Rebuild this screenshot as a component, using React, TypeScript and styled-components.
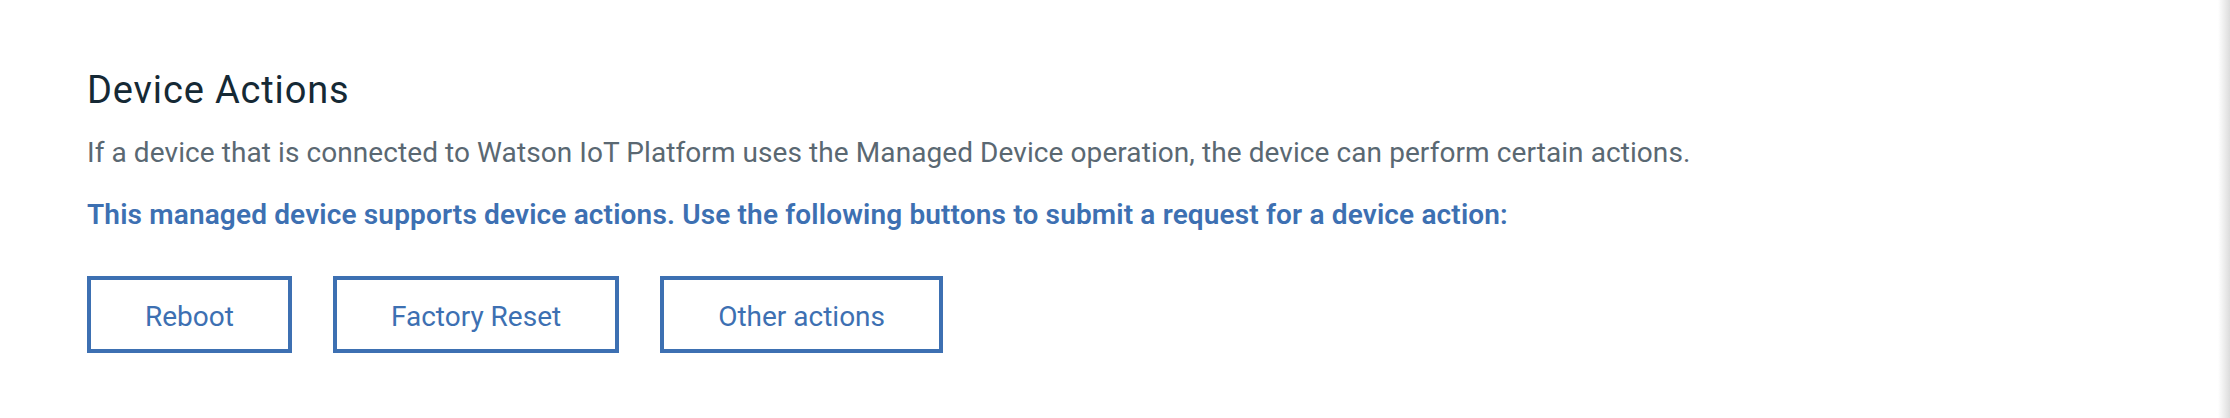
import React, { FC } from "react";
import styled, { createGlobalStyle } from "styled-components";

const GlobalStyle = createGlobalStyle`
  html, body {
    margin: 0;
    padding: 0;
    background: #ffffff;
  }
  body {
    font-family: Roboto, "Liberation Sans", Arial, sans-serif;
  }
`;

const actions = ["Reboot", "Factory Reset", "Other actions"];

const App: FC = () => {
  return (
    <>
      <GlobalStyle />
      <Page>
        <Panel>
          <Title>Device Actions</Title>
          <Description>
            If a device that is connected to Watson IoT Platform uses the
            Managed Device operation, the device can perform certain actions.
          </Description>
          <Notice>
            This managed device supports device actions. Use the following
            buttons to submit a request for a device action:
          </Notice>
          <ButtonRow>
            {actions.map((label) => (
              <ActionButton key={label} type="button">
                {label}
              </ActionButton>
            ))}
          </ButtonRow>
        </Panel>
        <EdgeShadow />
      </Page>
    </>
  );
};

const Page = styled.div`
  display: flex;
  width: 100%;
  height: 418px;
`;

const Panel = styled.main`
  flex: 1;
  display: flex;
  flex-direction: column;
  align-items: flex-start;
  padding: 68px 0 0 87px;
`;

const EdgeShadow = styled.div`
  width: 12px;
  background: linear-gradient(to right, #ffffff, #dcdcdc);
`;

const Title = styled.h2`
  margin: 0;
  font-size: 38px;
  line-height: 44px;
  font-weight: 400;
  letter-spacing: 0.85px;
  color: #152935;
`;

const Description = styled.p`
  margin: 23px 0 0;
  font-size: 28px;
  line-height: 36px;
  font-weight: 400;
  letter-spacing: 0.08px;
  color: #5a6872;
`;

const Notice = styled.p`
  margin: 26px 0 0;
  font-size: 28px;
  line-height: 36px;
  font-weight: 600;
  letter-spacing: 0.15px;
  color: #3d70b2;
`;

const ButtonRow = styled.div`
  display: flex;
  gap: 41px;
  margin-top: 43px;
`;

const ActionButton = styled.button`
  display: flex;
  align-items: center;
  justify-content: center;
  box-sizing: border-box;
  height: 77px;
  padding: 4px 54px 0;
  border: 4px solid #3d70b2;
  border-radius: 0;
  background: #ffffff;
  color: #3d70b2;
  font-family: Roboto, "Liberation Sans", Arial, sans-serif;
  font-size: 28px;
  font-weight: 400;
  cursor: pointer;
  &:hover {
    background: #3d70b2;
    color: #ffffff;
  }
`;

export default App;
